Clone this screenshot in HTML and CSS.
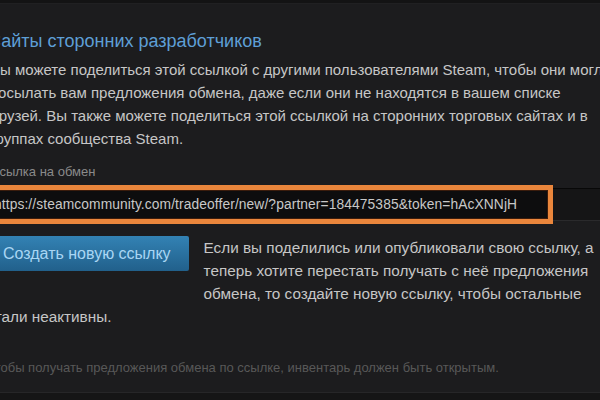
FILE: index.html
```html
<!DOCTYPE html>
<html lang="ru">
<head>
  <meta charset="UTF-8" />
  <meta name="viewport" content="width=device-width, initial-scale=1.0"/>
  <title>Ссылка на обмен</title>
  <link rel="stylesheet" href="styles.css">
</head>
<body>
  <div class="top-bar"></div>

  <div class="content">
    <h2 class="section-title">Сайты сторонних разработчиков</h2>

    <p class="intro">
      Вы можете поделиться этой ссылкой с другими пользователями Steam, чтобы они могли<br>
      посылать вам предложения обмена, даже если они не находятся в вашем списке<br>
      друзей. Вы также можете поделиться этой ссылкой на сторонних торговых сайтах и в<br>
      группах сообщества Steam.
    </p>

    <div class="field-label">Ссылка на обмен</div>
    <div class="url-row">
      <div class="url-box">https://steamcommunity.com/tradeoffer/new/?partner=184475385&amp;token=hAcXNNjH</div>
    </div>

    <div class="reset-block">
      <button class="btn-blue">Создать новую ссылку</button>
      <p class="reset-text">
        Если вы поделились или опубликовали свою ссылку, а<br>
        теперь хотите перестать получать с неё предложения<br>
        обмена, то создайте новую ссылку, чтобы остальные<br>
        стали неактивны.
      </p>
    </div>

    <div class="note">Чтобы получать предложения обмена по ссылке, инвентарь должен быть открытым.</div>
  </div>

  <div class="bottom-bar"></div>
</body>
</html>
```

FILE: styles.css
```css
* {
  box-sizing: border-box;
}

body {
  margin: 0;
  height: 400px;
  overflow: hidden;
  background: #1c1c1e;
  color: #c6c6c6;
  font-family: 'Liberation Sans', Arial, sans-serif;
  position: relative;
}

.top-bar {
  height: 4px;
  background: #131314;
  border-bottom: 1px solid #202022;
}

.content {
  margin-left: -10px;
  width: 660px;
}

.section-title {
  margin: 24px 0 0 -2px;
  font-size: 18px;
  font-weight: normal;
  line-height: 26px;
  color: #5e9fd6;
}

.intro {
  margin: 4px 0 0;
  font-size: 15px;
  line-height: 23px;
  white-space: nowrap;
}

.field-label {
  margin-top: 13px;
  font-size: 13px;
  line-height: 17px;
  color: #8a8a8a;
}

.url-row {
  margin-top: 8px;
  height: 33px;
  background: #151516;
  border-top: 1px solid #080808;
  border-bottom: 1px solid #2a2a2c;
}

.url-box {
  margin: -4px 0 0 -6px;
  width: 569px;
  height: 39px;
  border: 5px solid #ea863c;
  box-shadow: inset 0 0 0 1px #3a1c0c;
  background: #0d0d0e;
  padding-left: 5px;
  font-size: 13.8px;
  letter-spacing: 0.1px;
  line-height: 29px;
  color: #c8c8c8;
}

.reset-block {
  margin-top: 15px;
}

.btn-blue {
  float: left;
  margin: 0 15px 34px -5px;
  height: 35px;
  padding: 0 18px;
  border: none;
  border-radius: 2px;
  background: linear-gradient(to bottom, #3382b4, #21608b);
  color: #a9d6f4;
  font-family: 'Liberation Sans', Arial, sans-serif;
  font-size: 16px;
}

.reset-text {
  margin: 0 0 0 -3px;
  font-size: 15.3px;
  line-height: 23px;
  white-space: nowrap;
}

.note {
  clear: both;
  margin-left: -4px;
  padding-top: 31px;
  font-size: 13px;
  line-height: 17px;
  color: #585858;
}

.bottom-bar {
  position: absolute;
  left: 0;
  right: 0;
  bottom: 0;
  height: 8px;
  background: #151516;
  border-top: 1px solid #262628;
}
```
